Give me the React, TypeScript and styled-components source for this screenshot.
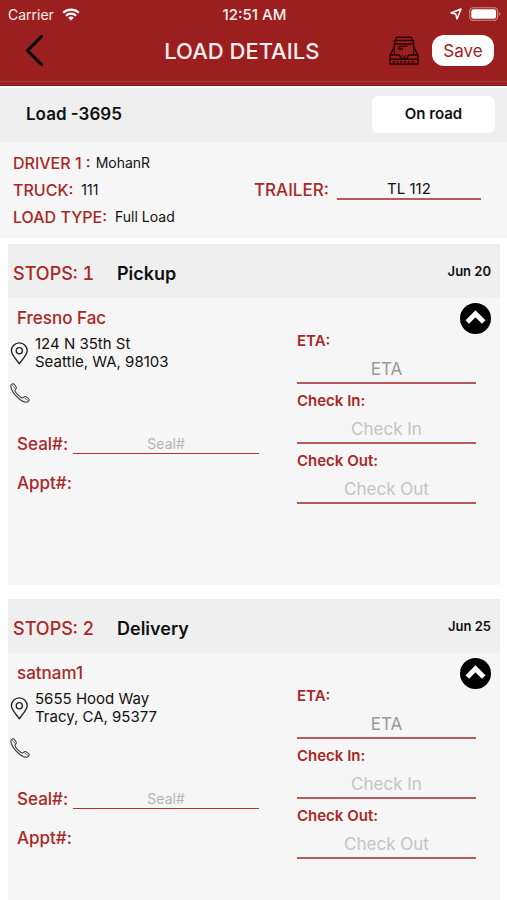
import React, { useState } from "react";
import styled, { createGlobalStyle } from "styled-components";

const red = "#9c1f1f";
const labelRed = "#a82828";

const GlobalStyle = createGlobalStyle`
  *, *::before, *::after { box-sizing: border-box; }
  html { scrollbar-width: none; }
  body {
    margin: 0;
    background: #fff;
    color: #111;
    font-family: Inter, "Liberation Sans", sans-serif;
  }
  button, input { font: inherit; color: inherit; }
  h1, h2, h3, p { margin: 0; font: inherit; }
`;

const Header = styled.header`
  background: ${red};
  color: #fdeeee;
  padding-bottom: 8px;
`;

const StatusBar = styled.div`
  display: grid;
  grid-template-columns: 1fr auto 1fr;
  align-items: center;
  height: 28px;
  padding: 0 6px 0 8px;
  font-size: 14px;
`;

const StatusGroup = styled.div<{ $end?: boolean }>`
  display: flex;
  align-items: center;
  gap: ${(p) => (p.$end ? 7 : 8)}px;
  justify-content: ${(p) => (p.$end ? "flex-end" : "flex-start")};
`;

const Clock = styled.time`
  font-size: 15px;
  font-weight: 500;
`;

const NavBar = styled.div`
  display: grid;
  grid-template-columns: 141fr auto 173fr;
  align-items: center;
  height: 45px;
  padding: 0 13px 0 22px;
`;

const HeaderEdge = styled.div`
  height: 5px;
  background: ${red};
  border-top: 1px solid #a83434;
  border-bottom: 1px solid #8c1f22;
`;

const Title = styled.h1`
  font-size: 22px;
  font-weight: 500;
  line-height: 28px;
`;

const NavActions = styled.div`
  display: flex;
  align-items: center;
  justify-content: flex-end;
  gap: 13px;
`;

const IconButton = styled.button`
  display: flex;
  justify-content: center;
  justify-self: start;
  padding: 0;
  border: 0;
  background: none;
  color: #000;
  cursor: pointer;
`;

const SaveButton = styled.button`
  width: 62px;
  height: 31px;
  padding: 0;
  border: 0;
  border-radius: 12px;
  background: #fff;
  color: ${red};
  font-size: 17px;
  cursor: pointer;
`;

const LoadBar = styled.section`
  display: flex;
  align-items: center;
  justify-content: space-between;
  height: 54px;
  margin-top: 2px;
  padding: 0 12px 2px 26px;
  background: #efefef;
`;

const LoadName = styled.h2`
  font-size: 17px;
  font-weight: 600;
`;

const StatusButton = styled.button`
  width: 123px;
  height: 37px;
  padding: 0 0 2px;
  border: 0;
  border-radius: 6px;
  background: #fff;
  font-size: 15px;
  font-weight: 600;
  cursor: pointer;
`;

const Info = styled.section`
  display: grid;
  grid-template-columns: 241fr 227fr;
  grid-auto-rows: 27px;
  align-items: center;
  padding: 7px 26px 8px 13px;
  background: #f6f6f6;
`;

const InfoItem = styled.div<{ $wide?: boolean; $tight?: boolean }>`
  display: flex;
  align-items: center;
  gap: ${(p) => (p.$tight ? 5 : 8)}px;
  grid-column: ${(p) => (p.$wide ? "1 / -1" : "auto")};
`;

const InfoLabel = styled.label<{ $large?: boolean }>`
  color: ${labelRed};
  font-size: ${(p) => (p.$large ? 17 : 16)}px;
  font-weight: 500;
  white-space: nowrap;
`;

const InfoValue = styled.span`
  font-size: 14px;
`;

const LineInput = styled.input`
  flex: 1 1 auto;
  width: 100%;
  min-width: 0;
  height: 20px;
  padding: 0;
  border: 0;
  border-bottom: 2px solid #b9595c;
  border-radius: 0;
  outline: 0;
  background: transparent;
  font-size: 14px;
  text-align: center;
  &::placeholder { color: #b4b4b4; opacity: 1; }
`;

const TrailerInput = styled(LineInput)`
  font-size: 15px;
`;

const TimeInput = styled(LineInput)<{ $dark?: boolean }>`
  height: 36px;
  padding-top: 7px;
  font-size: 17px;
  &::placeholder { color: ${(p) => (p.$dark ? "#999" : "#c4c4c4")}; }
`;

const SealInput = styled(LineInput)`
  border-bottom: 1px solid #b03434;
`;

const Stops = styled.main`
  display: grid;
  gap: 14px;
  padding: 6px 7px 14px 8px;
`;

const Card = styled.article`
  background: #f6f6f6;
`;

const CardHead = styled.header`
  display: flex;
  align-items: center;
  height: 54px;
  padding: 4px 9px 0 5px;
  background: #efefef;
`;

const StopNumber = styled.span`
  width: 104px;
  color: ${labelRed};
  font-size: 18px;
  font-weight: 500;
  font-variant-numeric: tabular-nums;
`;

const StopKind = styled.h2`
  font-size: 18px;
  font-weight: 600;
`;

const StopDate = styled.time`
  margin-left: auto;
  padding-bottom: 4px;
  font-size: 13px;
  font-weight: 600;
`;

const CardBody = styled.div`
  display: grid;
  grid-template-columns: 249fr 194fr;
  column-gap: 38px;
  min-height: 287px;
  padding: 5px 9px 24px 2px;
`;

const Company = styled.h3`
  padding: 3px 7px 0;
  color: ${labelRed};
  font-size: 17px;
  font-weight: 500;
  line-height: 24px;
`;

const AddressRow = styled.div`
  display: flex;
  align-items: center;
  gap: 7px;
  margin-top: 5px;
`;

const Address = styled.address`
  font-size: 15px;
  font-style: normal;
  line-height: 18px;
`;

const CallButton = styled(IconButton)`
  margin-top: 12px;
`;

const FieldRow = styled.div`
  display: flex;
  align-items: center;
  gap: 5px;
  height: 20px;
  margin: 31px 0 19px;
  padding-left: 7px;
`;

const FieldLabel = styled.label`
  color: ${labelRed};
  font-size: 17px;
  font-weight: 500;
`;

const Appointment = styled.p`
  padding-left: 7px;
  color: ${labelRed};
  font-size: 17px;
  font-weight: 500;
  line-height: 20px;
`;

const Times = styled.div`
  display: flex;
  flex-direction: column;
`;

const ToggleButton = styled(IconButton)`
  align-self: flex-end;
`;

const TimeField = styled.div`
  display: flex;
  flex-direction: column;
  margin: 0 15px 10px 0;
`;

const TimeLabel = styled.label`
  color: ${labelRed};
  font-size: 15px;
  font-weight: 600;
  line-height: 14px;
`;

const WifiIcon = () => (
  <svg width="18" height="13" viewBox="0 0 18 13" fill="none" stroke="#fff" strokeWidth="2.2">
    <path d="M1.2 4.8a11.2 11.2 0 0 1 15.6 0" />
    <path d="M4 7.7a7.2 7.2 0 0 1 10 0" />
    <path d="M9 12.6 6.2 9.8a4 4 0 0 1 5.6 0z" fill="#fff" stroke="none" />
  </svg>
);

const LocationIcon = () => (
  <svg width="12" height="12" viewBox="0 0 12 12" fill="none" stroke="#fff" strokeWidth="1.5" strokeLinejoin="round">
    <path d="M11 1 7 11 5.8 6.1 1 5z" />
  </svg>
);

const BatteryIcon = () => (
  <svg width="32" height="14" viewBox="0 0 32 14">
    <rect x=".7" y=".7" width="28" height="12.6" rx="3.6" fill="none" stroke="#d08b8b" strokeWidth="1.1" />
    <rect x="2.3" y="2.3" width="24.8" height="9.4" rx="2.2" fill="#fff" />
    <path d="M30.2 5v4c1.6-.6 1.6-3.4 0-4z" fill="#d08b8b" />
  </svg>
);

const BackIcon = () => (
  <svg width="24" height="32" viewBox="0 0 24 32" fill="none" stroke="#000" strokeWidth="3" strokeLinecap="round" strokeLinejoin="round">
    <path d="M19.5 1.5 5.5 15.5l14 14" />
  </svg>
);

const TrayIcon = () => (
  <svg width="30" height="29" viewBox="0 0 30 29" fill="none" stroke="#2a0505" strokeWidth="1.5" strokeLinejoin="round">
    <path d="M6.6 4.6 7.6 1.2h14.8l1 3.4M5.6 8V4.6h18.8V8M5.3 19V8h19.4v11" />
    <path d="M5.3 11 1 19v9h28v-9l-4.3-8" />
    <path d="M1 19h9.3l2 3.2h5.4l2-3.2H29M1 23.3h28" />
    <path d="M8.5 10.8h3l1-.8 1.5.8 1.5-.8 3 .2M8.5 13h5.5" strokeWidth="1.3" />
    <path d="M3.6 25.7h23" strokeDasharray="2.2 1.6" strokeWidth="1.5" />
    <path d="M13 19.2l2 1.4 2-1.4" strokeWidth="1" />
  </svg>
);

const PinIcon = () => (
  <svg width="18" height="23" viewBox="0 0 18 23" fill="none" stroke="#222" strokeWidth="1.3" strokeLinejoin="round">
    <path d="M9.3 21.8C7 18.2 1.4 13 1.4 8.8a7.9 7.9 0 0 1 15.8 0c0 4.2-5.6 9.4-7.9 13z" />
    <circle cx="9.3" cy="8.7" r="3.1" />
  </svg>
);

const PhoneIcon = () => (
  <svg width="20" height="20" viewBox="0 0 20 20" fill="none" stroke="#444" strokeWidth="1.1" strokeLinejoin="round">
    <path d="M.8 3.1C.6 1.9 2.3.6 3.3.8c1.2.3 3 3 3.1 4.1.1 1-1.5 1.6-1.4 2.7.2 2 5.2 7 7.3 7.3 1.2.1 1.7-1.5 2.8-1.4 1.1.1 3.9 2 4.1 3.1.1 1-1.3 2.6-2.5 2.6C11.1 19.3 1.4 9.9.8 3.1z" />
    <path d="M2.2 2.4c1.3.6 2.2 1.8 2.8 3.3M14.4 15c1.5.5 2.6 1.4 3.4 2.7" strokeWidth=".8" />
  </svg>
);

const CircleUpIcon = ({ open }: { open: boolean }) => (
  <svg width="31" height="31" viewBox="0 0 31 31">
    <circle cx="15.5" cy="15.5" r="15.5" fill="#000" />
    <path
      d={open ? "M7.3 19 15.5 10.8l8.2 8.2" : "M7.3 12 15.5 20.2l8.2-8.2"}
      fill="none"
      stroke="#fff"
      strokeWidth="5"
    />
  </svg>
);

type Stop = {
  number: number;
  kind: string;
  date: string;
  company: string;
  street: string;
  city: string;
};

const stops: Stop[] = [
  { number: 1, kind: "Pickup", date: "Jun 20", company: "Fresno Fac", street: "124 N 35th St", city: "Seattle, WA, 98103" },
  { number: 2, kind: "Delivery", date: "Jun 25", company: "satnam1", street: "5655 Hood Way", city: "Tracy, CA, 95377" },
];

const timeFields = ["ETA", "Check In", "Check Out"];

function StopCard({ stop }: { stop: Stop }) {
  const [open, setOpen] = useState(true);
  const sealId = `seal-${stop.number}`;
  return (
    <Card>
      <CardHead>
        <StopNumber>STOPS: {stop.number}</StopNumber>
        <StopKind>{stop.kind}</StopKind>
        <StopDate>{stop.date}</StopDate>
      </CardHead>
      <CardBody>
        <div>
          <Company>{stop.company}</Company>
          <AddressRow>
            <PinIcon />
            <Address>
              {stop.street}
              <br />
              {stop.city}
            </Address>
          </AddressRow>
          <CallButton type="button" aria-label="Call">
            <PhoneIcon />
          </CallButton>
          <FieldRow>
            <FieldLabel htmlFor={sealId}>Seal#:</FieldLabel>
            <SealInput id={sealId} placeholder="Seal#" />
          </FieldRow>
          <Appointment>Appt#:</Appointment>
        </div>
        <Times>
          <ToggleButton type="button" aria-label="Toggle stop" aria-expanded={open} onClick={() => setOpen(!open)}>
            <CircleUpIcon open={open} />
          </ToggleButton>
          {open &&
            timeFields.map((name) => {
              const id = `${name.replace(" ", "-").toLowerCase()}-${stop.number}`;
              return (
                <TimeField key={name}>
                  <TimeLabel htmlFor={id}>{name}:</TimeLabel>
                  <TimeInput id={id} placeholder={name} $dark={name === "ETA"} />
                </TimeField>
              );
            })}
        </Times>
      </CardBody>
    </Card>
  );
}

export default function App() {
  return (
    <>
      <GlobalStyle />
      <Header>
        <StatusBar>
          <StatusGroup>
            Carrier <WifiIcon />
          </StatusGroup>
          <Clock>12:51 AM</Clock>
          <StatusGroup $end>
            <LocationIcon />
            <BatteryIcon />
          </StatusGroup>
        </StatusBar>
        <NavBar>
          <IconButton type="button" aria-label="Back">
            <BackIcon />
          </IconButton>
          <Title>LOAD DETAILS</Title>
          <NavActions>
            <IconButton type="button" aria-label="Documents">
              <TrayIcon />
            </IconButton>
            <SaveButton type="button">Save</SaveButton>
          </NavActions>
        </NavBar>
      </Header>
      <HeaderEdge />
      <LoadBar>
        <LoadName>Load -3695</LoadName>
        <StatusButton type="button">On road</StatusButton>
      </LoadBar>
      <Info>
        <InfoItem $wide $tight>
          <InfoLabel as="span">DRIVER 1 :</InfoLabel>
          <InfoValue>MohanR</InfoValue>
        </InfoItem>
        <InfoItem>
          <InfoLabel as="span">TRUCK:</InfoLabel>
          <InfoValue>111</InfoValue>
        </InfoItem>
        <InfoItem>
          <InfoLabel htmlFor="trailer" $large>TRAILER:</InfoLabel>
          <TrailerInput id="trailer" defaultValue="TL 112" />
        </InfoItem>
        <InfoItem $wide>
          <InfoLabel as="span">LOAD TYPE:</InfoLabel>
          <InfoValue>Full Load</InfoValue>
        </InfoItem>
      </Info>
      <Stops>
        {stops.map((stop) => (
          <StopCard key={stop.number} stop={stop} />
        ))}
      </Stops>
    </>
  );
}
